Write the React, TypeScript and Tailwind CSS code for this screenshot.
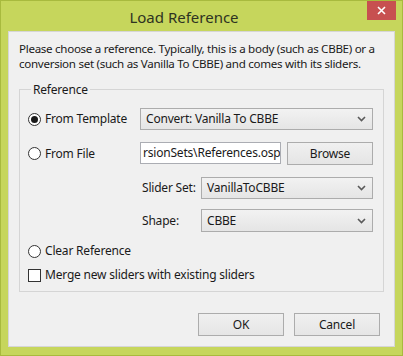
import React from 'react';

function Chevron() {
  return (
    <svg width="9" height="6" viewBox="0 0 9 6" className="shrink-0">
      <path d="M1 1 L4.5 4.5 L8 1" fill="none" stroke="#5a5a5a" strokeWidth="1.6" />
    </svg>
  );
}

function Select({ value, className }: { value: string; className: string }) {
  return (
    <div
      className={`flex h-[22px] items-center justify-between border border-[#acacac] bg-gradient-to-b from-[#f2f2f2] to-[#e5e5e5] pl-[5px] pr-[6px] ${className}`}
    >
      <span>{value}</span>
      <Chevron />
    </div>
  );
}

function Radio({ checked, label }: { checked?: boolean; label: string }) {
  return (
    <div className="flex items-center">
      <span className="flex h-[13px] w-[13px] items-center justify-center rounded-full border border-[#333] bg-white">
        {checked && <span className="h-[7px] w-[7px] rounded-full bg-[#1a1a1a]" />}
      </span>
      <span className="ml-[4px]">{label}</span>
    </div>
  );
}

function Button({ label, className = '' }: { label: string; className?: string }) {
  return (
    <div
      className={`flex h-[23px] w-[86px] items-center justify-center border border-[#acacac] bg-gradient-to-b from-[#f0f0f0] to-[#e5e5e5] ${className}`}
    >
      {label}
    </div>
  );
}

export default function App() {
  return (
    <div
      className="flex h-[356px] w-[403px] flex-col border border-[#a8ba3e] bg-[#c6d65c] text-[12px] tracking-[-0.2px] text-[#1a1a1a]"
      style={{ fontFamily: '"Noto Sans", "Open Sans", sans-serif' }}
    >
      {/* title bar */}
      <div className="flex h-[30px] items-start">
        <div className="flex-1 pt-[5px] text-center text-[15px] tracking-normal text-[#2e3322]">Load Reference</div>
        <div className="mr-[6px] flex h-[19px] w-[29px] items-center justify-center bg-[#c75050]">
          <svg width="9" height="9" viewBox="0 0 9 9">
            <path d="M1 1 L8 8 M8 1 L1 8" stroke="#fff" strokeWidth="1.6" />
          </svg>
        </div>
      </div>

      {/* client area */}
      <div className="mx-[7px] flex h-[316px] flex-col border border-[#d6d6d6] bg-[#f0f0f0] px-[10px] pt-[9px]">
        <p className="whitespace-nowrap text-[11.6px] leading-[15px] tracking-[-0.3px]">
          Please choose a reference. Typically, this is a body (such as CBBE) or a
          <br />
          conversion set (such as Vanilla To CBBE) and comes with its sliders.
        </p>

        <fieldset className="mt-[11px] h-[210px] border border-[#d5d5d5] pl-[8px] pr-[10px]">
          <legend className="ml-[3px] px-[2px] leading-[15px]">Reference</legend>

          <div className="mt-[11px] flex items-center justify-between">
            <Radio checked label="From Template" />
            <Select value="Convert: Vanilla To CBBE" className="w-[233px]" />
          </div>

          <div className="mt-[12px] flex items-center justify-between">
            <Radio label="From File" />
            <div className="flex gap-[6px]">
              <div className="flex h-[22px] w-[141px] items-center overflow-hidden whitespace-nowrap border border-[#abadb3] bg-white pl-[2px]">
                rsionSets\References.osp
              </div>
              <Button label="Browse" className="h-[22px]" />
            </div>
          </div>

          <div className="mt-[12px] flex items-center justify-end">
            <span className="mr-auto pl-[114px]">Slider Set:</span>
            <Select value="VanillaToCBBE" className="w-[172px]" />
          </div>

          <div className="mt-[10px] flex items-center justify-end">
            <span className="mr-auto pl-[114px]">Shape:</span>
            <Select value="CBBE" className="h-[23px] w-[172px]" />
          </div>

          <div className="mt-[10px]">
            <Radio label="Clear Reference" />
          </div>

          <div className="mt-[6px] flex items-center">
            <span className="h-[13px] w-[13px] border border-[#333] bg-white" />
            <span className="ml-[4px]">Merge new sliders with existing sliders</span>
          </div>
        </fieldset>

        <div className="mt-[21px] flex justify-end gap-[10px] pr-[4px]">
          <Button label="OK" />
          <Button label="Cancel" />
        </div>
      </div>
    </div>
  );
}
